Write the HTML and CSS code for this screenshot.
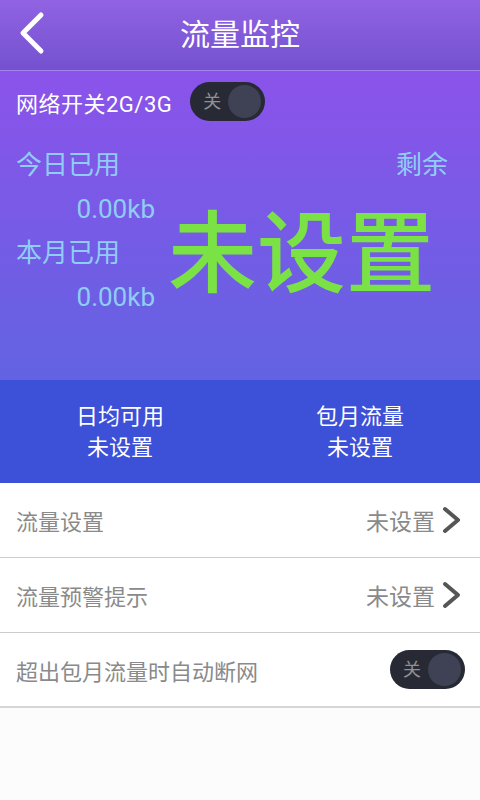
FILE: index.html
```html
<!DOCTYPE html>
<html lang="zh-CN">
<head>
<meta charset="utf-8">
<title>流量监控</title>
<link rel="stylesheet" href="styles.css">
</head>
<body>
<div class="app">
  <header class="topbar">
    <svg class="back" width="30" height="44" viewBox="0 0 30 44">
      <polyline points="22,4 4,22 22,40" fill="none" stroke="#ffffff" stroke-width="5" stroke-linecap="round" stroke-linejoin="round"/>
    </svg>
    <h1 class="title">流量监控</h1>
  </header>

  <section class="hero">
    <div class="net-row">
      <span class="net-label">网络开关2G/3G</span>
      <div class="toggle"><span class="toggle-text">关</span><span class="knob"></span></div>
    </div>
    <div class="stats">
      <div class="used">
        <div class="label">今日已用</div>
        <div class="value">0.00kb</div>
        <div class="label">本月已用</div>
        <div class="value">0.00kb</div>
      </div>
      <div class="remain">
        <div class="label remain-label">剩余</div>
        <div class="big">未设置</div>
      </div>
    </div>
  </section>

  <section class="band">
    <div class="band-col">
      <div>日均可用</div>
      <div>未设置</div>
    </div>
    <div class="band-col">
      <div>包月流量</div>
      <div>未设置</div>
    </div>
  </section>

  <ul class="list">
    <li class="row">
      <span class="row-label">流量设置</span>
      <span class="row-right">
        <span class="row-value">未设置</span>
        <svg class="chev" width="20" height="28" viewBox="0 0 20 28">
          <polyline points="3,3 16,14 3,25" fill="none" stroke="#555555" stroke-width="4" stroke-linecap="round" stroke-linejoin="round"/>
        </svg>
      </span>
    </li>
    <li class="row">
      <span class="row-label">流量预警提示</span>
      <span class="row-right">
        <span class="row-value">未设置</span>
        <svg class="chev" width="20" height="28" viewBox="0 0 20 28">
          <polyline points="3,3 16,14 3,25" fill="none" stroke="#555555" stroke-width="4" stroke-linecap="round" stroke-linejoin="round"/>
        </svg>
      </span>
    </li>
    <li class="row row-last">
      <span class="row-label">超出包月流量时自动断网</span>
      <div class="toggle"><span class="toggle-text">关</span><span class="knob"></span></div>
    </li>
  </ul>
</div>
</body>
</html>
```

FILE: styles.css
```css
* { box-sizing: border-box; }
html, body {
  margin: 0;
  padding: 0;
  background: #fcfcfc;
  font-family: Roboto, "Noto Sans CJK SC", sans-serif;
}
.app {
  width: 480px;
  min-height: 800px;
  background: #fcfcfc;
}
.topbar {
  height: 71px;
  display: flex;
  align-items: center;
  justify-content: center;
  position: relative;
  background: linear-gradient(#9063e3, #7451d0);
  border-bottom: 1px solid #a683ea;
}
.back {
  position: absolute;
  left: 19px;
  top: 11px;
}
.title {
  margin: 0;
  color: #ffffff;
  font-size: 30px;
  font-weight: normal;
  line-height: 70px;
}
.hero {
  height: 309px;
  background: linear-gradient(#8b53ea, #6263e2);
}
.net-row {
  height: 60px;
  display: flex;
  align-items: center;
  padding: 1px 16px 0 16px;
}
.net-label {
  color: #ffffff;
  font-size: 22px;
  letter-spacing: 0.5px;
  margin-right: 18px;
}
.toggle {
  width: 75px;
  height: 39px;
  flex: none;
  border-radius: 20px;
  background: #272a35;
  display: flex;
  align-items: center;
  justify-content: space-between;
  padding: 0 4px 0 13px;
}
.toggle-text {
  color: #8f8f94;
  font-size: 18px;
  line-height: 1;
}
.knob {
  width: 33px;
  height: 33px;
  border-radius: 50%;
  background: #3e4254;
}
.stats {
  display: flex;
  padding: 12px 32px 0 16px;
}
.used {
  width: 139px;
}
.label {
  color: #8fcdf7;
  font-size: 26px;
  line-height: 44px;
}
.value {
  color: #8fcdf7;
  font-size: 26px;
  line-height: 44px;
  text-align: right;
}
.remain {
  flex: 1;
}
.remain-label {
  text-align: right;
}
.big {
  color: #7be245;
  font-size: 89px;
  font-weight: 500;
  line-height: 88px;
  text-align: center;
  margin-top: 24px;
}
.band {
  height: 103px;
  background: #3c50d8;
  display: flex;
  padding-top: 21px;
}
.band-col {
  width: 240px;
  text-align: center;
  color: #ffffff;
  font-size: 22px;
  line-height: 31px;
}
.list {
  list-style: none;
  margin: 0;
  padding: 0;
  background: #ffffff;
}
.row {
  height: 75px;
  display: flex;
  align-items: center;
  justify-content: space-between;
  padding: 0 15px 0 16px;
  border-bottom: 1px solid #cccccc;
}
.row-right {
  margin-right: 3px;
}
.row-last {
  border-bottom: 2px solid #d6d6d6;
}
.row-label {
  color: #8a8a8a;
  font-size: 22px;
}
.row-right {
  display: flex;
  align-items: center;
}
.row-value {
  color: #8a8a8a;
  font-size: 23px;
  margin-right: 7px;
}
.chev {
  display: block;
}
```
